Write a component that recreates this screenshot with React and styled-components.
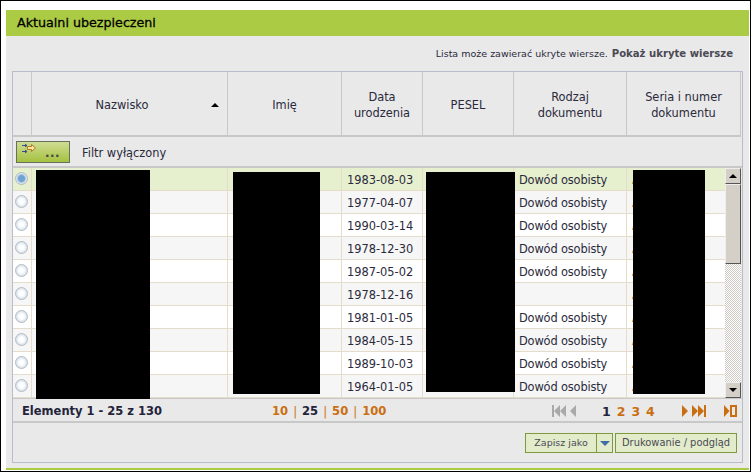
import React from "react";
import styled, { createGlobalStyle } from "styled-components";

const Global = createGlobalStyle`
  html, body { margin: 0; padding: 0; background: #fff; }
  * { box-sizing: border-box; }
`;

const COLS = "19px 196px 114px 81px 91px 113px 114px";

const Window = styled.div`
  width: 751px; height: 472px; border: 1px solid #000; background: #fff;
  padding: 9px 1px 1px 5px;
  font-family: "DejaVu Sans", Verdana, sans-serif; font-size: 11.4px; color: #2a2a3c;
  overflow: hidden;
`;
const Panel = styled.div`
  height: 460px; background: #e9e9e9; border-bottom: 2px solid #accb45;
  display: flex; flex-direction: column;
`;
const Title = styled.h1`
  margin: 0; height: 26px; flex: none; background: #accb45; color: #000;
  font-size: 12.7px; font-weight: 400; line-height: 26px; padding-left: 11px;
  -webkit-text-stroke: 0.3px #000;
`;
const Hint = styled.div`
  height: 35px; flex: none; padding: 8px 16px 0 0; text-align: right; font-size: 9.5px; line-height: 20px;
`;
const ShowLink = styled.a`
  font-size: 10.1px; font-weight: 700; color: #4a4a55; margin-left: 4px;
`;
const Grid = styled.div`
  width: 731px; margin-left: 6px; height: 392px; border: 1px solid #b9bdcb; display: flex; flex-direction: column;
`;
const HeadRow = styled.div`
  display: grid; grid-template-columns: ${COLS}; height: 65px; flex: none;
`;
const HeadCell = styled.div`
  border-right: 1px solid #c8c8c8; border-bottom: 2px solid #c8c8c8;
  display: flex; align-items: center; justify-content: center; text-align: center;
  line-height: 16px; position: relative; padding: 2px ${p => (p.$sorted ? 15 : 0)}px 0 0; white-space: pre-line;
`;
const SortMark = styled.span`
  position: absolute; right: 8px; top: 31px; width: 0; height: 0;
  border-left: 4px solid transparent; border-right: 4px solid transparent; border-bottom: 4px solid #000;
`;
const FilterRow = styled.div`
  height: 31px; flex: none; border-bottom: 2px solid #c8c8c8; display: flex; align-items: flex-start;
  padding: 4px 0 0 3px;
`;
const FilterButton = styled.button`
  width: 54px; height: 22px; padding: 0; border: 1px solid #66705c;
  background: linear-gradient(#cfdc94, #a5c23f); display: flex; position: relative; font: inherit; color: #444;
`;
const FilterDots = styled.span`
  position: absolute; left: 28px; top: 3px; font-size: 12px; font-weight: 700; line-height: 16px; letter-spacing: 0.5px;
`;
const FilterLabel = styled.span`
  margin-left: 12px; line-height: 24px;
`;
const Body = styled.div`
  position: relative; height: 230px; flex: none; display: flex;
`;
const Rows = styled.div`
  width: 712px; flex: none; overflow: hidden;
`;
const Row = styled.div`
  display: grid; grid-template-columns: ${COLS}; width: 728px; height: 23px;
  background: ${p => (p.$selected ? "#e6f0cf" : p.$even ? "#f6f6f6" : "#fff")};
`;
const Cell = styled.div`
  border-right: 1px solid #e6dccb; border-bottom: 1px solid #e6dccb;
  line-height: 22px; padding: 1px 0 0 5px; white-space: nowrap; overflow: hidden;
`;
const DocCell = styled(Cell)`
  letter-spacing: -0.15px;
`;
const RadioCell = styled.div`
  border-right: 1px solid #e6dccb; border-bottom: 1px solid #e6dccb; padding: 4px 0 0 2px;
`;
const Radio = styled.span`
  display: block; width: 13px; height: 13px; border-radius: 50%; border: 1px solid #b3bbc3;
  box-shadow: inset 0 0 0 1px #dde3e8;
  background: ${p => (p.$on
    ? "radial-gradient(circle, #6fa3d2 0 3px, #a9c9e6 4px, #dfe8ef 6px)"
    : "radial-gradient(circle, #fff 0 2px, #e4edf6 5px)")};
`;
const SerieChar = styled.span`color: #c46a12;`;
const Scrollbar = styled.div`
  width: 16px; flex: none; display: flex; flex-direction: column;
  background-color: #fff;
  background-image: conic-gradient(#cfcac3 25%, #fff 0 50%, #cfcac3 0 75%, #fff 0);
  background-size: 2px 2px;
`;
const ScrollButton = styled.div`
  height: 16px; flex: none; background: #d4d0c8;
  border: 1px solid; border-color: #eee #555 #555 #eee;
  display: flex; align-items: center; justify-content: center;
  &::after {
    content: ""; width: 0; height: 0;
    border-left: 4px solid transparent; border-right: 4px solid transparent;
    ${p => (p.$down ? "border-top: 4px solid #000;" : "border-bottom: 4px solid #000;")}
  }
`;
const Thumb = styled.div`
  height: 80px; flex: none; background: #d4d0c8;
  border: 1px solid; border-color: #eee #555 #555 #eee;
`;
const Spacer = styled.div`flex: 1;`;
const Redaction = styled.div`
  position: absolute; background: #000;
  left: ${p => p.$x}px; top: ${p => p.$y}px; width: ${p => p.$w}px; height: ${p => p.$h}px;
`;
const Footer = styled.div`
  height: 25px; flex: none; border-top: 1px solid #c8c8c8; border-bottom: 2px solid #c8c8c8;
  display: flex; align-items: center; padding-top: 2px;
`;
const Count = styled.b`
  width: 259px; padding-left: 9px; color: #23233a; flex: none; font-size: 11.5px;
`;
const Sizes = styled.div`
  width: 280px; flex: none; font-weight: 700; font-size: 11.6px; color: #c96f12; display: flex; gap: 5px;
`;
const Sep = styled.span`font-weight: 400; color: #c96f12;`;
const Current = styled.span`color: #23233a;`;
const Pager = styled.div`
  flex: 1; display: flex; align-items: center; height: 100%;
`;
const NavIcon = styled.svg`
  width: ${p => p.$w}px; height: 12px; flex: none; display: block; margin-left: ${p => p.$ml || 0}px;
`;
const PageNums = styled.div`
  display: flex; gap: 6px; font-weight: 700; font-size: 12.5px; color: #c96f12; margin: 0 27px 0 26px;
`;
const Actions = styled.div`
  flex: 1; display: flex; justify-content: flex-end; align-items: flex-start; padding: 10px 5px 0 0; gap: 2px;
`;
const ActionButton = styled.button`
  height: 20px; width: ${p => p.$w}px; border: 1px solid #7f9a3d; background: #e2eccb; color: #4a4a55;
  font-family: inherit; font-size: ${p => p.$size}px; padding: 0; display: flex; align-items: center;
`;
const ActionLabel = styled.span`
  flex: 1; text-align: center; line-height: 18px; white-space: nowrap;
`;
const Caret = styled.span`
  width: 16px; height: 18px; flex: none; border-left: 1px solid #7f9a3d; display: flex; align-items: center; justify-content: center;
  &::after {
    content: ""; border-left: 5px solid transparent; border-right: 5px solid transparent; border-top: 5px solid #3e6ea8;
  }
`;

const heads = ["", "Nazwisko", "Imię", "Data\nurodzenia", "PESEL", "Rodzaj\ndokumentu", "Seria i numer\ndokumentu"];
const rows = [
  ["1983-08-03", "Dowód osobisty"], ["1977-04-07", "Dowód osobisty"], ["1990-03-14", "Dowód osobisty"],
  ["1978-12-30", "Dowód osobisty"], ["1987-05-02", "Dowód osobisty"], ["1978-12-16", ""],
  ["1981-01-05", "Dowód osobisty"], ["1984-05-15", "Dowód osobisty"], ["1989-10-03", "Dowód osobisty"],
  ["1964-01-05", "Dowód osobisty"],
];
const blocks = [
  { x: 23, y: 2, w: 114, h: 229 }, { x: 220, y: 4, w: 87, h: 222 },
  { x: 413, y: 4, w: 89, h: 220 }, { x: 620, y: 2, w: 72, h: 224 },
];

export default function App() {
  return (
    <Window>
      <Global />
      <Panel>
        <Title>Aktualni ubezpieczeni</Title>
        <Hint>Lista może zawierać ukryte wiersze.<ShowLink>Pokaż ukryte wiersze</ShowLink></Hint>
        <Grid>
          <HeadRow>
            {heads.map((h, i) => (
              <HeadCell key={i} $sorted={i === 1}>{h}{i === 1 && <SortMark />}</HeadCell>
            ))}
          </HeadRow>
          <FilterRow>
            <FilterButton>
              <svg width="16" height="12" viewBox="0 0 16 12" style={{ margin: "1px 0 0 5px" }}>
                <path d="M0 2.5h5M0 8.5h5" stroke="#3a4a8a" fill="none" />
                <path d="M3 1l2 1.5L3 4M3 7l2 1.5L3 10" stroke="#3a4a8a" fill="none" />
                <path d="M5.5 3.5h4V1.5l4 3.5-4 3.5V6.5h-4z" fill="#f6e9a8" stroke="#b5781a" />
              </svg>
              <FilterDots>...</FilterDots>
            </FilterButton>
            <FilterLabel>Filtr wyłączony</FilterLabel>
          </FilterRow>
          <Body>
            <Rows>
              {rows.map((r, i) => (
                <Row key={i} $selected={i === 0} $even={i % 2 === 1}>
                  <RadioCell><Radio $on={i === 0} /></RadioCell>
                  <Cell />
                  <Cell />
                  <Cell>{r[0]}</Cell>
                  <Cell />
                  <DocCell>{r[1]}</DocCell>
                  <Cell><SerieChar>A</SerieChar></Cell>
                </Row>
              ))}
            </Rows>
            <Scrollbar>
              <ScrollButton />
              <Thumb />
              <Spacer />
              <ScrollButton $down />
            </Scrollbar>
            {blocks.map((b, i) => (
              <Redaction key={i} $x={b.x} $y={b.y} $w={b.w} $h={b.h} />
            ))}
          </Body>
          <Footer>
            <Count>Elementy 1 - 25 z 130</Count>
            <Sizes>
              <span>10</span><Sep>|</Sep><Current>25</Current><Sep>|</Sep><span>50</span><Sep>|</Sep><span>100</span>
            </Sizes>
            <Pager>
              <NavIcon $w={24} viewBox="0 0 24 12">
                <path d="M0 0h2v12H0zM8 0v12L2 6zM14 0v12L8 6zM24 0v12L18 6z" fill="#a9a9a9" />
              </NavIcon>
              <PageNums><Current>1</Current><span>2</span><span>3</span><span>4</span></PageNums>
              <NavIcon $w={24} viewBox="0 0 24 12">
                <path d="M0 0l6 6-6 6zM10 0l6 6-6 6zM16 0l6 6-6 6zM22 0h2v12h-2z" fill="#c96f12" />
              </NavIcon>
              <NavIcon $w={13} $ml={18} viewBox="0 0 13 12">
                <path d="M0 0l5.5 6L0 12z" fill="#c96f12" />
                <path d="M7 1h5v10H7z" fill="none" stroke="#c96f12" strokeWidth="2" />
              </NavIcon>
            </Pager>
          </Footer>
          <Actions>
            <ActionButton $w={88} $size={9.5}>
              <ActionLabel>Zapisz jako</ActionLabel>
              <Caret />
            </ActionButton>
            <ActionButton $w={122} $size={9.9}>
              <ActionLabel>Drukowanie / podgląd</ActionLabel>
            </ActionButton>
          </Actions>
        </Grid>
      </Panel>
    </Window>
  );
}
